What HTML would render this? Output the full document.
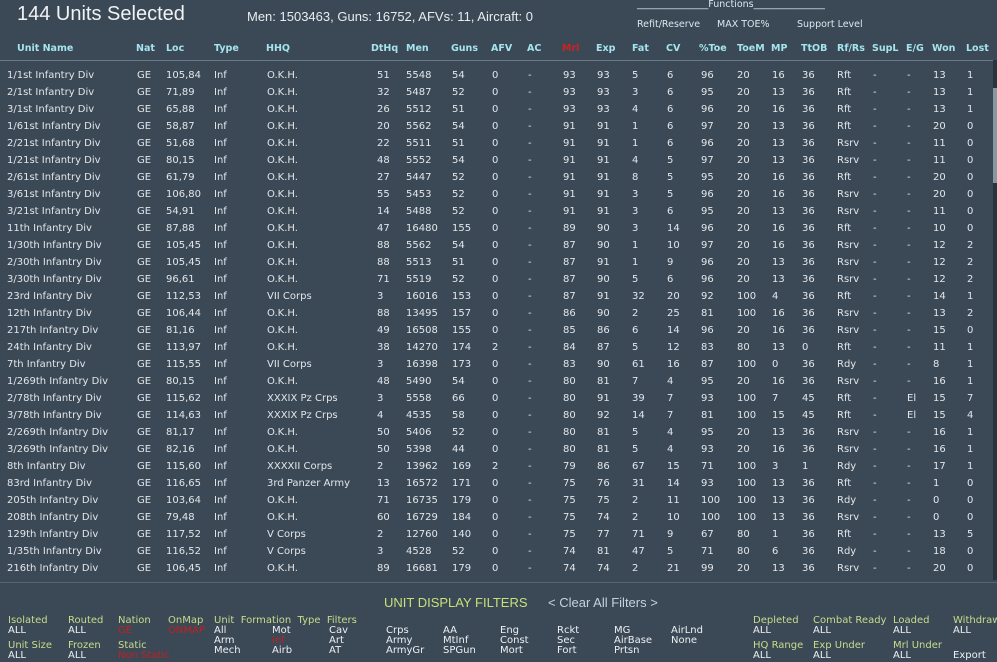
<!DOCTYPE html>
<html><head><meta charset="utf-8"><style>
*{margin:0;padding:0}
body{width:997px;height:662px;background:#3b4957;position:relative;overflow:hidden;font-family:"DejaVu Sans","Liberation Sans",sans-serif;color:#e2e6ea}
.a{position:absolute;white-space:nowrap}
.t{left:17px;top:3px;font:20px "Liberation Sans",sans-serif;color:#f0f2f4}
.m{left:247px;top:9px;font:13px "Liberation Sans",sans-serif;color:#e8ecee}
.f{font-size:9.5px;color:#d8e8ee}
.h{position:absolute;top:43px;left:0;width:997px;height:14px;font-weight:bold;font-size:9.5px;color:#a4e4ee}
.h span,.r span{position:absolute;white-space:nowrap}
.r{position:absolute;left:0;width:990px;height:14px;font-size:10px}
.r span:nth-child(1){left:7px}.r span:nth-child(2){left:137px}.r span:nth-child(3){left:166px}.r span:nth-child(4){left:214px}.r span:nth-child(5){left:267px}.r span:nth-child(6){left:377px}.r span:nth-child(7){left:406px}.r span:nth-child(8){left:452px}.r span:nth-child(9){left:492px}.r span:nth-child(10){left:528px}.r span:nth-child(11){left:563px}.r span:nth-child(12){left:597px}.r span:nth-child(13){left:632px}.r span:nth-child(14){left:667px}.r span:nth-child(15){left:701px}.r span:nth-child(16){left:737px}.r span:nth-child(17){left:772px}.r span:nth-child(18){left:802px}.r span:nth-child(19){left:837px}.r span:nth-child(20){left:873px}.r span:nth-child(21){left:907px}.r span:nth-child(22){left:933px}.r span:nth-child(23){left:967px}
.line{position:absolute;left:0;width:997px;height:1px;background:#6a7a88}
.lb{color:#c8dc8a;font-size:10px}
.w{color:#eef0f2;font-size:10px}
.rd{color:#c02020;font-size:10px}
.g{top:626px;line-height:10px}
</style></head><body>
<div class="a t">144 Units Selected</div>
<div class="a m">Men: 1503463, Guns: 16752, AFVs: 11, Aircraft: 0</div>
<div class="a f" style="left:637px;top:-1px">_______________Functions_______________</div>
<div class="a f" style="left:637px;top:19px">Refit/Reserve</div>
<div class="a f" style="left:717px;top:19px">MAX TOE%</div>
<div class="a f" style="left:797px;top:19px">Support Level</div>
<div class="h"><span style="left:17px">Unit Name</span><span style="left:136px">Nat</span><span style="left:166px">Loc</span><span style="left:214px">Type</span><span style="left:266px">HHQ</span><span style="left:371px">DtHq</span><span style="left:406px">Men</span><span style="left:451px">Guns</span><span style="left:491px">AFV</span><span style="left:527px">AC</span><span style="left:562px;color:#d02020">Mrl</span><span style="left:596px">Exp</span><span style="left:632px">Fat</span><span style="left:666px">CV</span><span style="left:699px">%Toe</span><span style="left:737px">ToeM</span><span style="left:771px">MP</span><span style="left:801px">TtOB</span><span style="left:837px">Rf/Rs</span><span style="left:872px">SupL</span><span style="left:906px">E/G</span><span style="left:932px">Won</span><span style="left:966px">Lost</span></div>
<div class="line" style="top:60px"></div>
<div style="position:absolute;left:993px;top:60px;width:4px;height:520px;background:#2a343e"></div>
<div style="position:absolute;left:993px;top:88px;width:4px;height:95px;background:#8a96a0"></div>
<div class="r" style="top:70px"><span>1/1st Infantry Div</span><span>GE</span><span>105,84</span><span>Inf</span><span>O.K.H.</span><span>51</span><span>5548</span><span>54</span><span>0</span><span>-</span><span>93</span><span>93</span><span>5</span><span>6</span><span>96</span><span>20</span><span>16</span><span>36</span><span>Rft</span><span>-</span><span>-</span><span>13</span><span>1</span></div>
<div class="r" style="top:87px"><span>2/1st Infantry Div</span><span>GE</span><span>71,89</span><span>Inf</span><span>O.K.H.</span><span>32</span><span>5487</span><span>52</span><span>0</span><span>-</span><span>93</span><span>93</span><span>3</span><span>6</span><span>95</span><span>20</span><span>13</span><span>36</span><span>Rft</span><span>-</span><span>-</span><span>13</span><span>1</span></div>
<div class="r" style="top:104px"><span>3/1st Infantry Div</span><span>GE</span><span>65,88</span><span>Inf</span><span>O.K.H.</span><span>26</span><span>5512</span><span>51</span><span>0</span><span>-</span><span>93</span><span>93</span><span>4</span><span>6</span><span>96</span><span>20</span><span>16</span><span>36</span><span>Rft</span><span>-</span><span>-</span><span>13</span><span>1</span></div>
<div class="r" style="top:121px"><span>1/61st Infantry Div</span><span>GE</span><span>58,87</span><span>Inf</span><span>O.K.H.</span><span>20</span><span>5562</span><span>54</span><span>0</span><span>-</span><span>91</span><span>91</span><span>1</span><span>6</span><span>97</span><span>20</span><span>13</span><span>36</span><span>Rft</span><span>-</span><span>-</span><span>20</span><span>0</span></div>
<div class="r" style="top:138px"><span>2/21st Infantry Div</span><span>GE</span><span>51,68</span><span>Inf</span><span>O.K.H.</span><span>22</span><span>5511</span><span>51</span><span>0</span><span>-</span><span>91</span><span>91</span><span>1</span><span>6</span><span>96</span><span>20</span><span>13</span><span>36</span><span>Rsrv</span><span>-</span><span>-</span><span>11</span><span>0</span></div>
<div class="r" style="top:155px"><span>1/21st Infantry Div</span><span>GE</span><span>80,15</span><span>Inf</span><span>O.K.H.</span><span>48</span><span>5552</span><span>54</span><span>0</span><span>-</span><span>91</span><span>91</span><span>4</span><span>5</span><span>97</span><span>20</span><span>13</span><span>36</span><span>Rsrv</span><span>-</span><span>-</span><span>11</span><span>0</span></div>
<div class="r" style="top:172px"><span>2/61st Infantry Div</span><span>GE</span><span>61,79</span><span>Inf</span><span>O.K.H.</span><span>27</span><span>5447</span><span>52</span><span>0</span><span>-</span><span>91</span><span>91</span><span>8</span><span>5</span><span>95</span><span>20</span><span>16</span><span>36</span><span>Rft</span><span>-</span><span>-</span><span>20</span><span>0</span></div>
<div class="r" style="top:189px"><span>3/61st Infantry Div</span><span>GE</span><span>106,80</span><span>Inf</span><span>O.K.H.</span><span>55</span><span>5453</span><span>52</span><span>0</span><span>-</span><span>91</span><span>91</span><span>3</span><span>5</span><span>96</span><span>20</span><span>16</span><span>36</span><span>Rsrv</span><span>-</span><span>-</span><span>20</span><span>0</span></div>
<div class="r" style="top:206px"><span>3/21st Infantry Div</span><span>GE</span><span>54,91</span><span>Inf</span><span>O.K.H.</span><span>14</span><span>5488</span><span>52</span><span>0</span><span>-</span><span>91</span><span>91</span><span>3</span><span>6</span><span>95</span><span>20</span><span>13</span><span>36</span><span>Rsrv</span><span>-</span><span>-</span><span>11</span><span>0</span></div>
<div class="r" style="top:223px"><span>11th Infantry Div</span><span>GE</span><span>87,88</span><span>Inf</span><span>O.K.H.</span><span>47</span><span>16480</span><span>155</span><span>0</span><span>-</span><span>89</span><span>90</span><span>3</span><span>14</span><span>96</span><span>20</span><span>16</span><span>36</span><span>Rft</span><span>-</span><span>-</span><span>10</span><span>0</span></div>
<div class="r" style="top:240px"><span>1/30th Infantry Div</span><span>GE</span><span>105,45</span><span>Inf</span><span>O.K.H.</span><span>88</span><span>5562</span><span>54</span><span>0</span><span>-</span><span>87</span><span>90</span><span>1</span><span>10</span><span>97</span><span>20</span><span>16</span><span>36</span><span>Rsrv</span><span>-</span><span>-</span><span>12</span><span>2</span></div>
<div class="r" style="top:257px"><span>2/30th Infantry Div</span><span>GE</span><span>105,45</span><span>Inf</span><span>O.K.H.</span><span>88</span><span>5513</span><span>51</span><span>0</span><span>-</span><span>87</span><span>91</span><span>1</span><span>9</span><span>96</span><span>20</span><span>13</span><span>36</span><span>Rsrv</span><span>-</span><span>-</span><span>12</span><span>2</span></div>
<div class="r" style="top:274px"><span>3/30th Infantry Div</span><span>GE</span><span>96,61</span><span>Inf</span><span>O.K.H.</span><span>71</span><span>5519</span><span>52</span><span>0</span><span>-</span><span>87</span><span>90</span><span>5</span><span>6</span><span>96</span><span>20</span><span>13</span><span>36</span><span>Rsrv</span><span>-</span><span>-</span><span>12</span><span>2</span></div>
<div class="r" style="top:291px"><span>23rd Infantry Div</span><span>GE</span><span>112,53</span><span>Inf</span><span>VII Corps</span><span>3</span><span>16016</span><span>153</span><span>0</span><span>-</span><span>87</span><span>91</span><span>32</span><span>20</span><span>92</span><span>100</span><span>4</span><span>36</span><span>Rft</span><span>-</span><span>-</span><span>14</span><span>1</span></div>
<div class="r" style="top:308px"><span>12th Infantry Div</span><span>GE</span><span>106,44</span><span>Inf</span><span>O.K.H.</span><span>88</span><span>13495</span><span>157</span><span>0</span><span>-</span><span>86</span><span>90</span><span>2</span><span>25</span><span>81</span><span>100</span><span>16</span><span>36</span><span>Rsrv</span><span>-</span><span>-</span><span>13</span><span>2</span></div>
<div class="r" style="top:325px"><span>217th Infantry Div</span><span>GE</span><span>81,16</span><span>Inf</span><span>O.K.H.</span><span>49</span><span>16508</span><span>155</span><span>0</span><span>-</span><span>85</span><span>86</span><span>6</span><span>14</span><span>96</span><span>20</span><span>16</span><span>36</span><span>Rsrv</span><span>-</span><span>-</span><span>15</span><span>0</span></div>
<div class="r" style="top:342px"><span>24th Infantry Div</span><span>GE</span><span>113,97</span><span>Inf</span><span>O.K.H.</span><span>38</span><span>14270</span><span>174</span><span>2</span><span>-</span><span>84</span><span>87</span><span>5</span><span>12</span><span>83</span><span>80</span><span>13</span><span>0</span><span>Rft</span><span>-</span><span>-</span><span>11</span><span>1</span></div>
<div class="r" style="top:359px"><span>7th Infantry Div</span><span>GE</span><span>115,55</span><span>Inf</span><span>VII Corps</span><span>3</span><span>16398</span><span>173</span><span>0</span><span>-</span><span>83</span><span>90</span><span>61</span><span>16</span><span>87</span><span>100</span><span>0</span><span>36</span><span>Rdy</span><span>-</span><span>-</span><span>8</span><span>1</span></div>
<div class="r" style="top:376px"><span>1/269th Infantry Div</span><span>GE</span><span>80,15</span><span>Inf</span><span>O.K.H.</span><span>48</span><span>5490</span><span>54</span><span>0</span><span>-</span><span>80</span><span>81</span><span>7</span><span>4</span><span>95</span><span>20</span><span>16</span><span>36</span><span>Rsrv</span><span>-</span><span>-</span><span>16</span><span>1</span></div>
<div class="r" style="top:393px"><span>2/78th Infantry Div</span><span>GE</span><span>115,62</span><span>Inf</span><span>XXXIX Pz Crps</span><span>3</span><span>5558</span><span>66</span><span>0</span><span>-</span><span>80</span><span>91</span><span>39</span><span>7</span><span>93</span><span>100</span><span>7</span><span>45</span><span>Rft</span><span>-</span><span>El</span><span>15</span><span>7</span></div>
<div class="r" style="top:410px"><span>3/78th Infantry Div</span><span>GE</span><span>114,63</span><span>Inf</span><span>XXXIX Pz Crps</span><span>4</span><span>4535</span><span>58</span><span>0</span><span>-</span><span>80</span><span>92</span><span>14</span><span>7</span><span>81</span><span>100</span><span>15</span><span>45</span><span>Rft</span><span>-</span><span>El</span><span>15</span><span>4</span></div>
<div class="r" style="top:427px"><span>2/269th Infantry Div</span><span>GE</span><span>81,17</span><span>Inf</span><span>O.K.H.</span><span>50</span><span>5406</span><span>52</span><span>0</span><span>-</span><span>80</span><span>81</span><span>5</span><span>4</span><span>95</span><span>20</span><span>13</span><span>36</span><span>Rsrv</span><span>-</span><span>-</span><span>16</span><span>1</span></div>
<div class="r" style="top:444px"><span>3/269th Infantry Div</span><span>GE</span><span>82,16</span><span>Inf</span><span>O.K.H.</span><span>50</span><span>5398</span><span>44</span><span>0</span><span>-</span><span>80</span><span>81</span><span>5</span><span>4</span><span>93</span><span>20</span><span>16</span><span>36</span><span>Rsrv</span><span>-</span><span>-</span><span>16</span><span>1</span></div>
<div class="r" style="top:461px"><span>8th Infantry Div</span><span>GE</span><span>115,60</span><span>Inf</span><span>XXXXII Corps</span><span>2</span><span>13962</span><span>169</span><span>2</span><span>-</span><span>79</span><span>86</span><span>67</span><span>15</span><span>71</span><span>100</span><span>3</span><span>1</span><span>Rdy</span><span>-</span><span>-</span><span>17</span><span>1</span></div>
<div class="r" style="top:478px"><span>83rd Infantry Div</span><span>GE</span><span>116,65</span><span>Inf</span><span>3rd Panzer Army</span><span>13</span><span>16572</span><span>171</span><span>0</span><span>-</span><span>75</span><span>76</span><span>31</span><span>14</span><span>93</span><span>100</span><span>13</span><span>36</span><span>Rft</span><span>-</span><span>-</span><span>1</span><span>0</span></div>
<div class="r" style="top:495px"><span>205th Infantry Div</span><span>GE</span><span>103,64</span><span>Inf</span><span>O.K.H.</span><span>71</span><span>16735</span><span>179</span><span>0</span><span>-</span><span>75</span><span>75</span><span>2</span><span>11</span><span>100</span><span>100</span><span>13</span><span>36</span><span>Rdy</span><span>-</span><span>-</span><span>0</span><span>0</span></div>
<div class="r" style="top:512px"><span>208th Infantry Div</span><span>GE</span><span>79,48</span><span>Inf</span><span>O.K.H.</span><span>60</span><span>16729</span><span>184</span><span>0</span><span>-</span><span>75</span><span>74</span><span>2</span><span>10</span><span>100</span><span>100</span><span>13</span><span>36</span><span>Rsrv</span><span>-</span><span>-</span><span>0</span><span>0</span></div>
<div class="r" style="top:529px"><span>129th Infantry Div</span><span>GE</span><span>117,52</span><span>Inf</span><span>V Corps</span><span>2</span><span>12760</span><span>140</span><span>0</span><span>-</span><span>75</span><span>77</span><span>71</span><span>9</span><span>67</span><span>80</span><span>1</span><span>36</span><span>Rft</span><span>-</span><span>-</span><span>13</span><span>5</span></div>
<div class="r" style="top:546px"><span>1/35th Infantry Div</span><span>GE</span><span>116,52</span><span>Inf</span><span>V Corps</span><span>3</span><span>4528</span><span>52</span><span>0</span><span>-</span><span>74</span><span>81</span><span>47</span><span>5</span><span>71</span><span>80</span><span>6</span><span>36</span><span>Rdy</span><span>-</span><span>-</span><span>18</span><span>0</span></div>
<div class="r" style="top:563px"><span>216th Infantry Div</span><span>GE</span><span>106,45</span><span>Inf</span><span>O.K.H.</span><span>89</span><span>16681</span><span>179</span><span>0</span><span>-</span><span>74</span><span>74</span><span>2</span><span>21</span><span>99</span><span>20</span><span>13</span><span>36</span><span>Rsrv</span><span>-</span><span>-</span><span>20</span><span>0</span></div>
<div class="line" style="top:582px;background:#566472"></div>
<div class="a" style="left:384px;top:595px;font:13px 'Liberation Sans',sans-serif;color:#c8e078">UNIT DISPLAY FILTERS</div>
<div class="a" style="left:548px;top:595px;font:13px 'Liberation Sans',sans-serif;color:#c4d2de">&lt; Clear All Filters &gt;</div>
<div class="a lb" style="left:8px;top:615px">Isolated</div><div class="a w" style="left:8px;top:625px">ALL</div>
<div class="a lb" style="left:8px;top:640px">Unit Size</div><div class="a w" style="left:8px;top:650px">ALL</div>
<div class="a lb" style="left:68px;top:615px">Routed</div><div class="a w" style="left:68px;top:625px">ALL</div>
<div class="a lb" style="left:68px;top:640px">Frozen</div><div class="a w" style="left:68px;top:650px">ALL</div>
<div class="a lb" style="left:118px;top:615px">Nation</div><div class="a rd" style="left:118px;top:625px">GE</div>
<div class="a lb" style="left:118px;top:640px">Static</div><div class="a rd" style="left:118px;top:650px">Non Static</div>
<div class="a lb" style="left:168px;top:615px">OnMap</div><div class="a rd" style="left:168px;top:625px">ONMAP</div>
<div class="a lb" style="left:214px;top:615px">Unit&nbsp; Formation&nbsp; Type&nbsp; Filters</div>
<div class="a w g" style="left:214px">All<br>Arm<br>Mech</div>
<div class="a w g" style="left:272px">Mot<br><span style="color:#c02020">Inf</span><br>Airb</div>
<div class="a w g" style="left:329px">Cav<br>Art<br>AT</div>
<div class="a w g" style="left:386px">Crps<br>Army<br>ArmyGr</div>
<div class="a w g" style="left:443px">AA<br>MtInf<br>SPGun</div>
<div class="a w g" style="left:500px">Eng<br>Const<br>Mort</div>
<div class="a w g" style="left:557px">Rckt<br>Sec<br>Fort</div>
<div class="a w g" style="left:614px">MG<br>AirBase<br>Prtsn</div>
<div class="a w g" style="left:671px">AirLnd<br>None</div>
<div class="a lb" style="left:753px;top:615px">Depleted</div><div class="a w" style="left:753px;top:625px">ALL</div>
<div class="a lb" style="left:753px;top:640px">HQ Range</div><div class="a w" style="left:753px;top:650px">ALL</div>
<div class="a lb" style="left:813px;top:615px">Combat Ready</div><div class="a w" style="left:813px;top:625px">ALL</div>
<div class="a lb" style="left:813px;top:640px">Exp Under</div><div class="a w" style="left:813px;top:650px">ALL</div>
<div class="a lb" style="left:893px;top:615px">Loaded</div><div class="a w" style="left:893px;top:625px">ALL</div>
<div class="a lb" style="left:893px;top:640px">Mrl Under</div><div class="a w" style="left:893px;top:650px">ALL</div>
<div class="a lb" style="left:953px;top:615px">Withdraw</div><div class="a w" style="left:953px;top:625px">ALL</div>
<div class="a w" style="left:953px;top:650px">Export</div>
</body></html>
